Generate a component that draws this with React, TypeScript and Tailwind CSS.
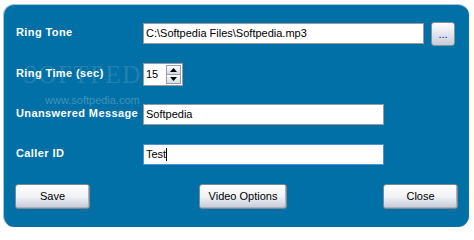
import React from "react";

const font = { fontFamily: '"Liberation Sans", Arial, sans-serif' };

function Label({ children }: { children: React.ReactNode }) {
  return (
    <div className="relative -top-[1px] w-[127px] shrink-0 text-[11px] font-bold tracking-[0.4px] text-white leading-none">
      {children}
    </div>
  );
}

function Btn({ children, w }: { children: React.ReactNode; w: string }) {
  return (
    <div
      className={`${w} h-[25px] flex items-center justify-center rounded-[3px] border border-[#7f8791] bg-gradient-to-b from-white via-[#f0f2f6] to-[#c4cbd7] text-[11px] text-black shadow-[inset_-1px_-1px_0_#aab1bd]`}
    >
      {children}
    </div>
  );
}

export default function App() {
  return (
    <div className="w-[474px] h-[231px] bg-white pt-[4px] pl-[3px]" style={font}>
      <div className="relative w-[466px] h-[223px] rounded-[11px] border-t border-l border-[#a9c2d4] bg-[#0170a6] overflow-hidden">
        {/* watermark */}
        <div
          className="absolute left-[19px] top-[57px] text-[25px] tracking-[1.5px] text-white/15 leading-none select-none"
          style={{ fontFamily: '"Liberation Serif", "Times New Roman", serif' }}
        >
          SOFTPEDIA
        </div>
        <div className="absolute left-[41px] top-[90px] text-[11px] text-white/25 leading-none select-none">
          www.softpedia.com
        </div>

        <div className="relative flex flex-col pl-[12px]">
          {/* Row 1 */}
          <div className="mt-[17px] flex h-[23px] items-center">
            <Label>Ring Tone</Label>
            <div className="flex h-[21px] w-[281px] items-center border border-[#9a9a9a] bg-white pl-[2px] text-[11px] text-black">
              C:\Softpedia Files\Softpedia.mp3
            </div>
            <div className="ml-[7px] flex h-[24px] w-[24px] items-end justify-center rounded-[3px] border border-[#8a9098] bg-gradient-to-b from-white to-[#c7cdd9] pb-[5px] text-[11px] leading-none text-[#0000ff]">
              ...
            </div>
          </div>

          {/* Row 2 */}
          <div className="mt-[18px] flex h-[23px] items-center">
            <Label>Ring Time (sec)</Label>
            <div className="flex h-[23px] w-[40px] items-center border border-[#9a9a9a] bg-white pl-[2px]">
              <span className="flex-1 text-[11px] text-black">15</span>
              <div className="mr-[1px] flex h-[19px] w-[15px] flex-col">
                <div className="flex h-[9.5px] items-center justify-center border border-[#9aa0a8] bg-gradient-to-b from-white to-[#d6dae2]">
                  <svg width="7" height="4" viewBox="0 0 7 4"><path d="M3.5 0 L7 4 L0 4 Z" fill="#000" /></svg>
                </div>
                <div className="flex h-[9.5px] items-center justify-center border border-t-0 border-[#9aa0a8] bg-gradient-to-b from-white to-[#d6dae2]">
                  <svg width="7" height="4" viewBox="0 0 7 4"><path d="M0 0 L7 0 L3.5 4 Z" fill="#000" /></svg>
                </div>
              </div>
            </div>
          </div>

          {/* Row 3 */}
          <div className="mt-[18px] flex h-[21px] items-center">
            <Label>Unanswered Message</Label>
            <div className="flex h-[21px] w-[241px] items-center border border-[#9a9a9a] bg-white pl-[2px] text-[11px] text-black">
              Softpedia
            </div>
          </div>

          {/* Row 4 */}
          <div className="mt-[19px] flex h-[21px] items-center">
            <Label>Caller ID</Label>
            <div className="flex h-[21px] w-[241px] items-center border border-[#4d90d6] bg-white pl-[2px] text-[11px] text-black">
              Test
              <span className="inline-block h-[13px] w-[1px] bg-black" />
            </div>
          </div>

          {/* Buttons */}
          <div className="mt-[19px] flex -ml-[1px]">
            <Btn w="w-[75px]">Save</Btn>
            <div className="ml-[109px]">
              <Btn w="w-[88px]">Video Options</Btn>
            </div>
            <div className="ml-[96px]">
              <Btn w="w-[75px]">Close</Btn>
            </div>
          </div>
        </div>
      </div>
    </div>
  );
}
